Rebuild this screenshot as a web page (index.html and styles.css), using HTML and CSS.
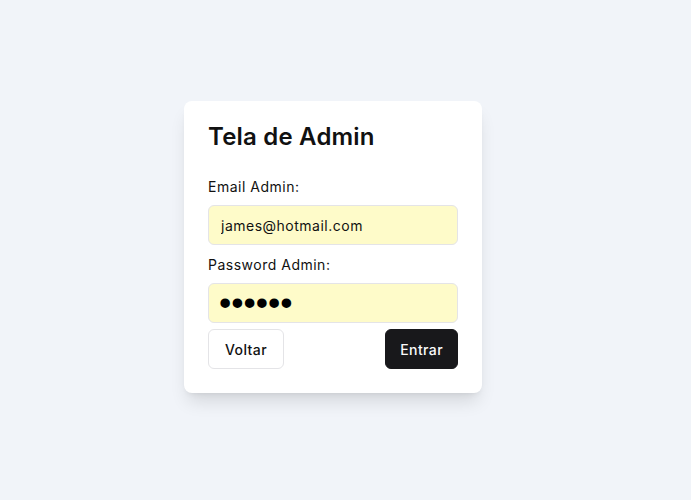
FILE: index.html
```html
<!DOCTYPE html>
<html lang="pt">
<head>
    <meta charset="UTF-8">
    <meta name="viewport" content="width=device-width, initial-scale=1.0">
    <title>Tela de Admin</title>
    <link rel="stylesheet" href="styles.css">
</head>
<body>
    <div class="login-card">
        <h2>Tela de Admin</h2>
        <form class="login-form">
            <label for="email">Email Admin:</label>
            <input type="text" id="email" class="field" value="james@hotmail.com">
            <label for="password">Password Admin:</label>
            <input type="password" id="password" class="field" value="123456">
            <div class="actions">
                <button type="button" class="btn btn-outline">Voltar</button>
                <button type="button" class="btn btn-dark">Entrar</button>
            </div>
        </form>
    </div>
</body>
</html>
```

FILE: styles.css
```css
body {
    font-family: Inter, 'Open Sans', sans-serif;
    background: #f1f4f9;
    margin: 0;
    height: 100vh;
    display: flex;
    justify-content: center;
    align-items: flex-start;
}
.login-card {
    margin-top: 101px;
    margin-right: 25px;
    width: 250px;
    background: white;
    padding: 24px;
    border-radius: 8px;
    box-shadow: 0 12px 18px -4px rgba(0, 0, 0, 0.12), 0 4px 6px -4px rgba(0, 0, 0, 0.1);
}
h2 {
    margin: 0 0 27px 0;
    font-size: 24px;
    line-height: 24px;
    font-weight: 600;
    color: #111;
    letter-spacing: 0.2px;
}
.login-form {
    display: flex;
    flex-direction: column;
}
label {
    font-size: 14px;
    line-height: 21px;
    color: #111;
    letter-spacing: 0.5px;
    margin-bottom: 8px;
}
.field {
    box-sizing: border-box;
    height: 40px;
    padding: 0 12px;
    border: 1px solid #e4e4e7;
    border-radius: 6px;
    background: #fefbc9;
    font-family: inherit;
    font-size: 14px;
    letter-spacing: 0.5px;
    color: #111;
    margin-bottom: 9px;
}
#password {
    margin-bottom: 6px;
    padding: 0 10px;
    font-family: 'Liberation Sans', sans-serif;
    font-size: 35px;
    letter-spacing: 0;
    color: #000;
}
.actions {
    display: flex;
    justify-content: space-between;
}
.btn {
    height: 40px;
    padding: 0 16px;
    border-radius: 6px;
    font-family: inherit;
    font-size: 14px;
    font-weight: 500;
    letter-spacing: 0.4px;
    cursor: pointer;
}
.btn-outline {
    background: white;
    border: 1px solid #e4e4e7;
    color: #111;
}
.btn-dark {
    padding: 0 14px;
    background: #18181b;
    border: 1px solid #18181b;
    color: #fafafa;
}
```
